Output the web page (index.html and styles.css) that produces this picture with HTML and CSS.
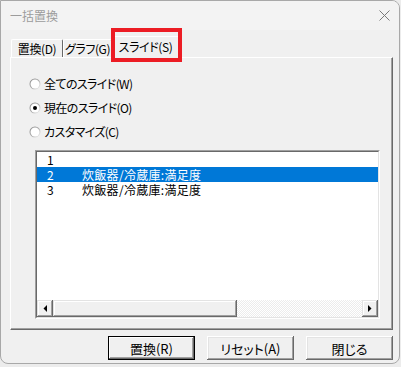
FILE: index.html
```html
<!DOCTYPE html>
<html lang="ja">
<head>
<meta charset="utf-8">
<title>一括置換</title>
<link rel="stylesheet" href="styles.css">
</head>
<body>
<div class="window">
  <div class="titlebar">
    <span class="title">一括置換</span>
    <svg class="close" width="11" height="11" viewBox="0 0 11 11"><path d="M0.5 0.5 L10.5 10.5 M10.5 0.5 L0.5 10.5" stroke="#7a7a7a" stroke-width="1" fill="none"/></svg>
  </div>
  <div class="body">
    <div class="tabs">
      <div class="tab t1">置換(D)</div>
      <div class="tab t2">グラフ(G)</div>
      <div class="tab active">スライド(S)</div>
    </div>
    <div class="highlight"></div>
    <div class="panel">
      <div class="radio-list">
        <div class="radio">
          <svg class="rb" width="12" height="12" viewBox="0 0 12 12"><defs><linearGradient id="g1" x1="0" y1="0" x2="1" y2="1"><stop offset="0" stop-color="#8a8a8a"/><stop offset="0.5" stop-color="#a8a8a8"/><stop offset="1" stop-color="#ffffff"/></linearGradient></defs><circle cx="6" cy="6" r="5.5" fill="url(#g1)"/><circle cx="6" cy="6" r="4.5" fill="#fff"/></svg>
          <span class="lbl">全てのスライド(W)</span>
        </div>
        <div class="radio">
          <svg class="rb" width="12" height="12" viewBox="0 0 12 12"><circle cx="6" cy="6" r="5.5" fill="url(#g1)"/><circle cx="6" cy="6" r="4.5" fill="#fff"/><circle cx="6" cy="6" r="2" fill="#000"/></svg>
          <span class="lbl">現在のスライド(O)</span>
        </div>
        <div class="radio">
          <svg class="rb" width="12" height="12" viewBox="0 0 12 12"><circle cx="6" cy="6" r="5.5" fill="url(#g1)"/><circle cx="6" cy="6" r="4.5" fill="#fff"/></svg>
          <span class="lbl">カスタマイズ(C)</span>
        </div>
      </div>
      <div class="listbox">
        <div class="lb-inner">
          <div class="rows">
            <div class="row"><span class="num">1</span><span class="name"></span></div>
            <div class="row sel"><span class="num">2</span><span class="name">炊飯器/冷蔵庫:満足度</span></div>
            <div class="row"><span class="num">3</span><span class="name">炊飯器/冷蔵庫:満足度</span></div>
          </div>
          <div class="hscroll">
            <div class="sbtn"><svg width="4" height="7" viewBox="0 0 4 7"><path d="M4 0 L4 7 L0.5 3.5 Z" fill="#000"/></svg></div>
            <div class="thumb"></div>
            <div class="track"></div>
            <div class="sbtn"><svg width="4" height="7" viewBox="0 0 4 7"><path d="M0 0 L0 7 L3.5 3.5 Z" fill="#000"/></svg></div>
          </div>
        </div>
      </div>
    </div>
    <div class="buttons">
      <div class="btn default">置換(R)</div>
      <div class="btn">リセット(A)</div>
      <div class="btn">閉じる</div>
    </div>
  </div>
</div>
</body>
</html>
```
FILE: styles.css
```css
* { box-sizing: border-box; }
html, body { margin: 0; padding: 0; }
body {
  width: 401px;
  height: 367px;
  background: #ececec;
  font-family: "Noto Sans CJK JP", "Noto Sans", sans-serif;
  font-size: 12px;
  font-feature-settings: "palt";
  color: #000;
  overflow: hidden;
}
.window {
  width: 400px;
  height: 364px;
  border: 1px solid #a8a8a8;
  border-radius: 0 8px 8px 8px;
  background: #f0f0f0;
  display: flex;
  flex-direction: column;
  overflow: hidden;
}
.titlebar {
  height: 29px;
  flex: none;
  background: #f3f3f3;
  display: flex;
  align-items: center;
  justify-content: space-between;
  padding: 0 9px 0 9px;
}
.title {
  font-size: 12px;
  color: #9c9c9c;
  font-feature-settings: normal;
}
.close { display: block; }
.body {
  flex: 1;
  position: relative;
  padding: 6px 6px 0 9px;
}
.tabs {
  display: flex;
  align-items: flex-end;
  height: 22px;
  padding-left: 1px;
  margin-bottom: -1px;
  position: relative;
  z-index: 1;
}
.tab {
  height: 18px;
  margin-bottom: 1px;
  display: flex;
  align-items: center;
  justify-content: center;
  border-top: 1px solid #fff;
  border-left: 1px solid #fff;
  border-right: 1px solid #696969;
  border-radius: 2px 2px 0 0;
  background: #f0f0f0;
  line-height: 1;
  white-space: nowrap;
  letter-spacing: -0.4px;
}
.t1 { width: 52px; }
.t2 { width: 49px; }
.active {
  width: 69px;
  height: 22px;
  margin-bottom: 0;
  margin-left: -1px;
  padding-bottom: 2px;
}
.highlight {
  position: absolute;
  left: 110px;
  top: -2px;
  width: 71px;
  height: 34px;
  border: 4px solid #ec1c24;
  z-index: 2;
}
.panel {
  width: 383px;
  height: 273px;
  border-top: 1px solid #fff;
  border-left: 1px solid #fff;
  border-right: 1px solid #696969;
  border-bottom: 1px solid #696969;
  box-shadow: inset -1px -1px #a0a0a0;
  padding: 16px 0 0 18px;
}
.radio-list {
  display: flex;
  flex-direction: column;
  gap: 4px;
}
.radio {
  height: 20px;
  display: flex;
  align-items: center;
  gap: 3px;
  line-height: 1;
}
.lbl { letter-spacing: -0.6px; white-space: nowrap; }
.rb { display: block; flex: none; }
.listbox {
  margin: 8px 0 0 6px;
  width: 345px;
  height: 169px;
  border: 1px solid;
  border-color: #a0a0a0 #fff #fff #a0a0a0;
  display: flex;
}
.lb-inner {
  flex: 1;
  border: 1px solid;
  border-color: #696969 #e3e3e3 #e3e3e3 #696969;
  background: #fff;
  display: flex;
  flex-direction: column;
}
.rows { flex: 1; }
.row {
  height: 15px;
  display: flex;
  align-items: center;
  line-height: 15px;
  font-size: 12px;
  letter-spacing: 0.3px;
  font-feature-settings: normal;
  white-space: nowrap;
}
.row.sel { background: #0078d7; color: #fff; }
.num { width: 45px; padding-left: 10px; flex: none; }
.hscroll {
  height: 17px;
  display: flex;
  flex: none;
}
.sbtn, .thumb {
  background: #f0f0f0;
  box-shadow: inset -1px -1px #696969, inset 1px 1px #e3e3e3, inset -2px -2px #a0a0a0, inset 2px 2px #fff;
}
.sbtn {
  width: 16px;
  display: flex;
  align-items: center;
  justify-content: center;
}
.sbtn svg { display: block; }
.thumb { width: 184px; }
.track {
  flex: 1;
  background: repeating-conic-gradient(#ffffff 0 25%, #ececec 0 50%) 0 0 / 2px 2px;
}
.buttons {
  display: flex;
  gap: 12px;
  margin: 6px 0 0 98px;
}
.btn {
  width: 87px;
  height: 24px;
  display: flex;
  align-items: center;
  justify-content: center;
  background: #f0f0f0;
  box-shadow: inset -1px -1px #696969, inset 1px 1px #fff, inset -2px -2px #a0a0a0, inset 2px 2px #e3e3e3;
  line-height: 1;
  font-size: 13px;
}
.btn.default {
  border: 1px solid #000;
  box-shadow: inset -1px -1px #696969, inset 1px 1px #fff, inset -2px -2px #a0a0a0;
}
```
